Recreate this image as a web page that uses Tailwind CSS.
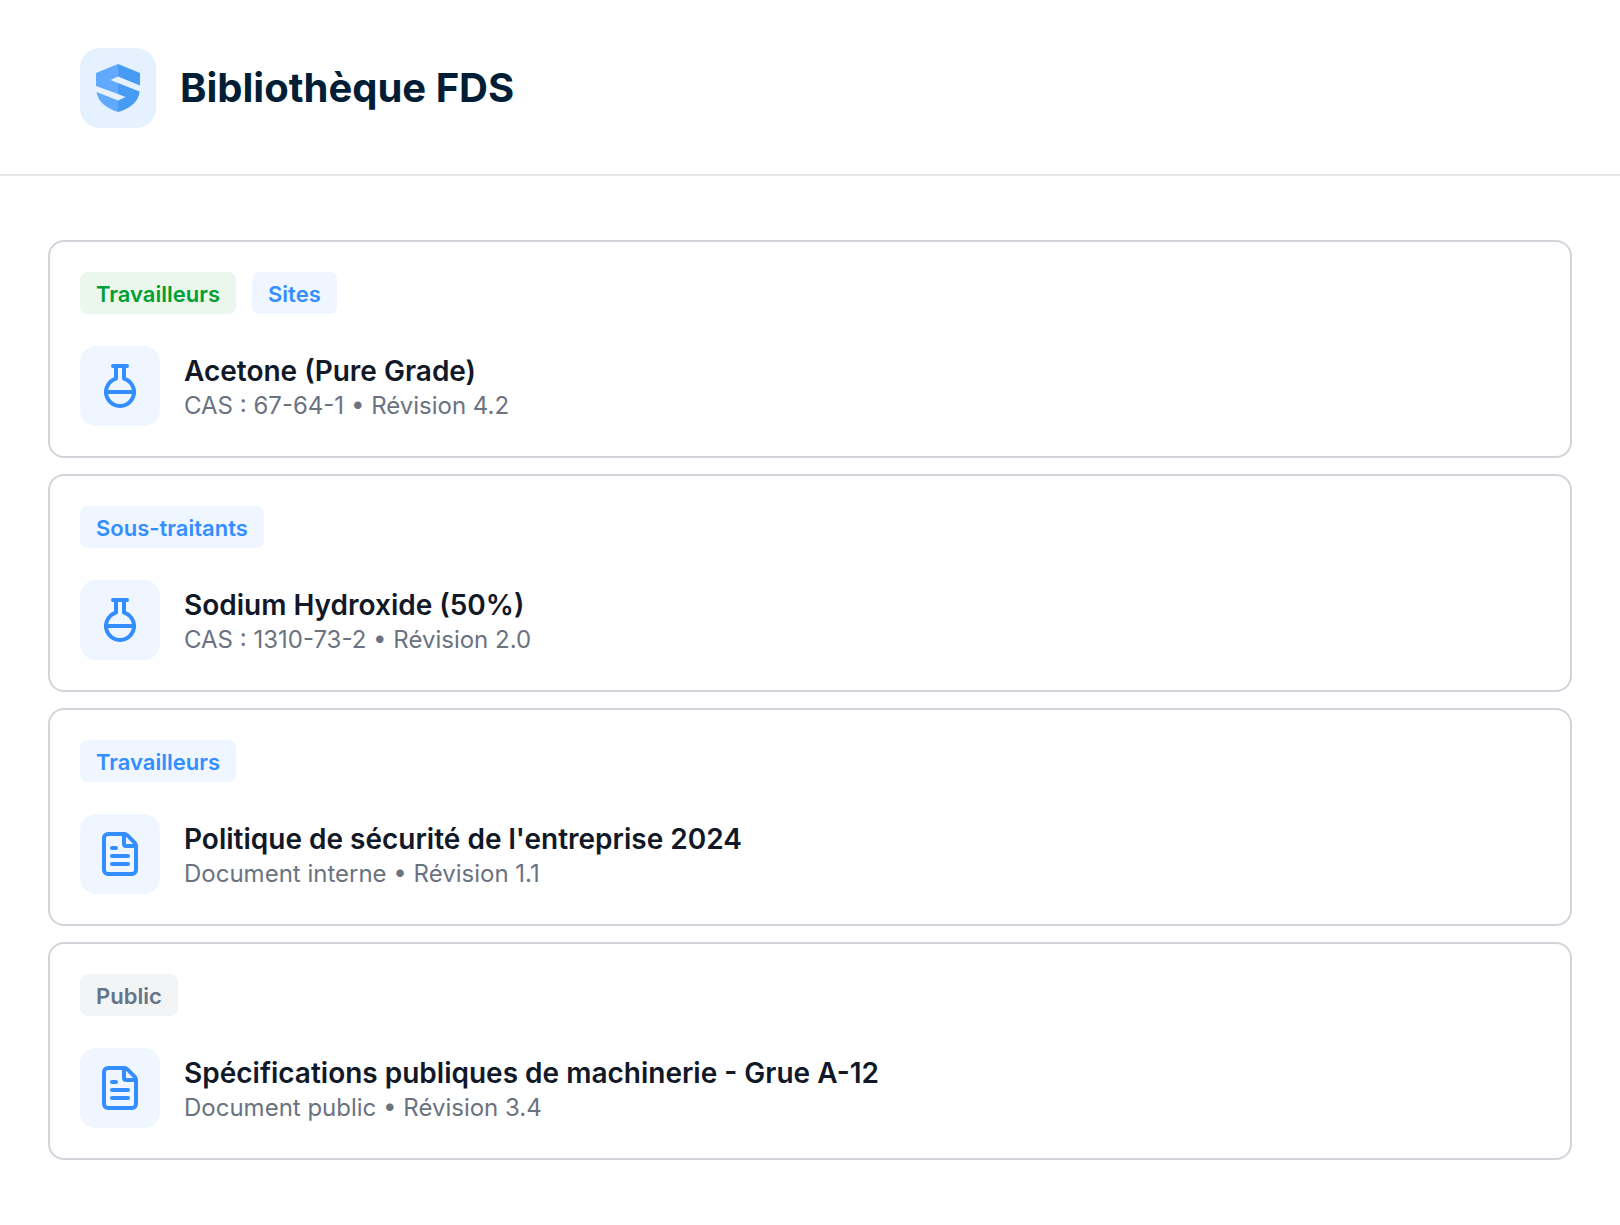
<!DOCTYPE html>
<html lang="fr">
  <head>
    <meta charset="UTF-8" />
    <meta name="viewport" content="width=device-width, initial-scale=1.0" />
    <title>Bibliothèque FDS</title>
    <script src="https://cdn.jsdelivr.net/npm/@tailwindcss/browser@4"></script>
  </head>
  <body class="min-h-screen bg-white font-[Inter,sans-serif]">

    <!-- icons shared by the cards -->
    <svg class="hidden" aria-hidden="true">
      <symbol id="flask" viewBox="0 0 24 24" fill="none" stroke="currentColor" stroke-width="2" stroke-linecap="round" stroke-linejoin="round">
        <path d="M10 2v6.292a7 7 0 1 0 4 0V2" />
        <path d="M5 15h14" />
        <path d="M8.5 2h7" />
      </symbol>
      <symbol id="file" viewBox="0 0 24 24" fill="none" stroke="currentColor" stroke-width="2" stroke-linecap="round" stroke-linejoin="round">
        <path d="M6 22a2 2 0 0 1-2-2V4a2 2 0 0 1 2-2h8a2.4 2.4 0 0 1 1.704.706l3.588 3.588A2.4 2.4 0 0 1 20 8v12a2 2 0 0 1-2 2z" />
        <path d="M14 2v5a1 1 0 0 0 1 1h5" />
        <path d="M10 9H8" />
        <path d="M16 13H8" />
        <path d="M16 17H8" />
      </symbol>
    </svg>

    <header class="flex items-center gap-6 px-20 pt-12 pb-[46px] border-b-2 border-[#e5e7eb]">
      <div class="flex items-center justify-center w-[76px] h-20 rounded-[20px] bg-[#e5f1ff]">
        <svg class="w-[44px] h-12" viewBox="0 0 44 48" aria-hidden="true">
          <path fill="#61a9ff" d="M22 0 0 9V22L22 30V19L14.500 16 22 12.500z" />
          <path fill="#61a9ff" d="M0.500 28 22 36.500V48C10 44 2 38 0.500 28z" />
          <path fill="#479bf2" d="M22 0 44 9V21.500L22 12.500z" />
          <path fill="#479bf2" d="M22 19 43.500 27.500C43 38 33 45 22 48V36.500L29.500 33 22 30z" />
        </svg>
      </div>
      <h1 class="text-[40px] leading-12 font-bold text-[#001e36]">Bibliothèque FDS</h1>
    </header>

    <main class="flex flex-col gap-4 px-12 py-16">

      <article class="flex flex-col gap-8 p-[30px] border-2 border-[#d1d5db] rounded-2xl">
        <div class="flex gap-4">
          <span class="px-4 pt-1 pb-0.5 rounded-lg text-[22px] leading-9 font-semibold bg-[#ebf6ed] text-[#00a032]">Travailleurs</span>
          <span class="px-4 pt-1 pb-0.5 rounded-lg text-[22px] leading-9 font-semibold bg-[#eff6ff] text-[#338eff]">Sites</span>
        </div>
        <div class="flex items-center gap-6">
          <div class="flex items-center justify-center size-20 rounded-2xl bg-[#eff6ff] text-[#338eff]">
            <svg class="size-12" aria-hidden="true"><use href="#flask" /></svg>
          </div>
          <div>
            <h2 class="text-[28px] leading-10 font-semibold text-[#111827]">Acetone (Pure Grade)</h2>
            <p class="text-[24px] leading-[30px] text-[#6b7280]">CAS : 67-64-1 • Révision 4.2</p>
          </div>
        </div>
      </article>

      <article class="flex flex-col gap-8 p-[30px] border-2 border-[#d1d5db] rounded-2xl">
        <div class="flex gap-4">
          <span class="px-4 pt-1 pb-0.5 rounded-lg text-[22px] leading-9 font-semibold bg-[#eff6ff] text-[#338eff]">Sous-traitants</span>
        </div>
        <div class="flex items-center gap-6">
          <div class="flex items-center justify-center size-20 rounded-2xl bg-[#eff6ff] text-[#338eff]">
            <svg class="size-12" aria-hidden="true"><use href="#flask" /></svg>
          </div>
          <div>
            <h2 class="text-[28px] leading-10 font-semibold text-[#111827]">Sodium Hydroxide (50%)</h2>
            <p class="text-[24px] leading-[30px] text-[#6b7280]">CAS : 1310-73-2 • Révision 2.0</p>
          </div>
        </div>
      </article>

      <article class="flex flex-col gap-8 p-[30px] border-2 border-[#d1d5db] rounded-2xl">
        <div class="flex gap-4">
          <span class="px-4 pt-1 pb-0.5 rounded-lg text-[22px] leading-9 font-semibold bg-[#eff6ff] text-[#338eff]">Travailleurs</span>
        </div>
        <div class="flex items-center gap-6">
          <div class="flex items-center justify-center size-20 rounded-2xl bg-[#eff6ff] text-[#338eff]">
            <svg class="size-12" aria-hidden="true"><use href="#file" /></svg>
          </div>
          <div>
            <h2 class="text-[28px] leading-10 font-semibold text-[#111827]">Politique de sécurité de l'entreprise 2024</h2>
            <p class="text-[24px] leading-[30px] text-[#6b7280]">Document interne • Révision 1.1</p>
          </div>
        </div>
      </article>

      <article class="flex flex-col gap-8 p-[30px] border-2 border-[#d1d5db] rounded-2xl">
        <div class="flex gap-4">
          <span class="px-4 pt-1 pb-0.5 rounded-lg text-[22px] leading-9 font-semibold bg-[#f3f4f6] text-[#64748b]">Public</span>
        </div>
        <div class="flex items-center gap-6">
          <div class="flex items-center justify-center size-20 rounded-2xl bg-[#eff6ff] text-[#338eff]">
            <svg class="size-12" aria-hidden="true"><use href="#file" /></svg>
          </div>
          <div>
            <h2 class="text-[28px] leading-10 font-semibold text-[#111827]">Spécifications publiques de machinerie - Grue A-12</h2>
            <p class="text-[24px] leading-[30px] text-[#6b7280]">Document public • Révision 3.4</p>
          </div>
        </div>
      </article>

    </main>
  </body>
</html>
